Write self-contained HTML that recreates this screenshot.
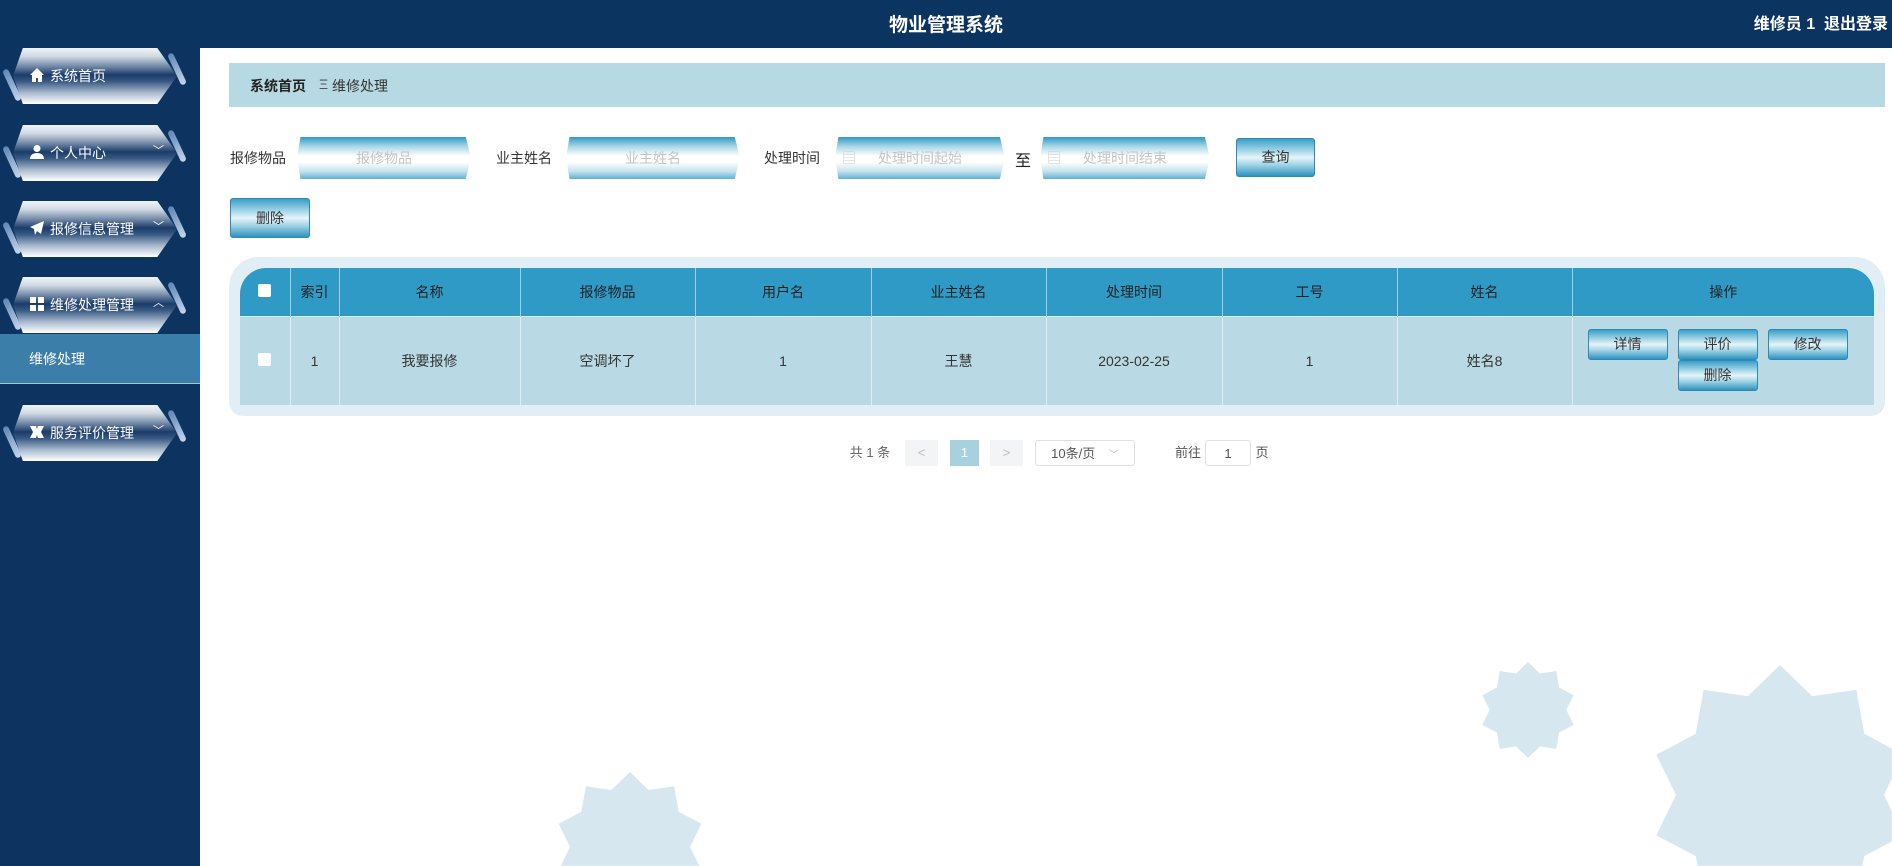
<!DOCTYPE html>
<html><head><meta charset="utf-8"><style>
*{box-sizing:border-box;margin:0;padding:0}
html,body{width:1892px;height:866px;overflow:hidden}
body{background:#fff;font-family:"Liberation Sans","Noto Sans CJK SC",sans-serif;font-size:13px;color:#333;position:relative}
#wrap{position:absolute;left:0;top:0;width:1892px;height:866px;overflow:hidden}
.hdr{position:absolute;left:0;top:0;width:1892px;height:48px;background:#0c3460}
.hdr .t{position:absolute;left:0;width:1892px;top:10px;text-align:center;color:#fff;font-size:19px;font-weight:bold}
.hdr .r{position:absolute;right:4px;top:10px;color:#fff;font-size:16px;font-weight:bold}
.side{position:absolute;left:0;top:48px;width:200px;height:818px;background:#0d3461}
.mi{position:absolute;left:0;width:200px;height:58px}
.mi .sh{position:absolute;left:13px;top:0;width:164px;height:56px;clip-path:polygon(6% 0,88% 0,100% 50%,88% 100%,6% 100%,0 50%);background:linear-gradient(#f0f4f8 0%,#d0d9e3 15%,#7088a6 33%,#1b3b69 48%,#3a5a84 60%,#a9bace 80%,#ffffff 100%)}
.mi .bl{position:absolute;left:9px;top:20px;width:6px;height:34px;background:linear-gradient(#5d86b8,#c6d6ea);border-radius:3px;transform:rotate(-25deg)}
.mi .br{position:absolute;left:174px;top:4px;width:6px;height:34px;background:linear-gradient(#5d86b8,#c6d6ea);border-radius:3px;transform:rotate(-25deg)}
.mi .lb{position:absolute;left:50px;top:18px;color:#fff;font-size:14px}
.mi .ic{position:absolute;left:29px;top:19px;width:16px;height:16px}
.mi .ar{position:absolute;left:153px;top:17px;color:#fff;font-size:11px}
.sub{position:absolute;left:0;top:334px;width:200px;height:50px;background:#3a7ea9;border-bottom:1px solid #9cc;}
.sub span{position:absolute;left:29px;top:15px;color:#fff;font-size:14px}
.bc{position:absolute;left:229px;top:63px;width:1656px;height:44px;background:#b7d9e3}
.bc span{position:absolute;top:13px;font-size:14px}
.lab{position:absolute;top:148px;font-size:14px;color:#333}
.inp{position:absolute;top:137px;height:42px;clip-path:polygon(2% 0,97% 0,100% 50%,97% 100%,2% 100%,0 50%);background:linear-gradient(#2f99c2 0%,#a7d5e6 22%,#fff 45%,#fff 60%,#c4e2ee 82%,#5fb1d1 100%);color:#c5c5c5;text-align:center;line-height:42px;font-size:14px}
.btn{position:absolute;background:linear-gradient(#3a9fc8 0%,#9fd3e6 30%,#e6f4f9 50%,#9fd3e6 70%,#2f93bd 100%);border-radius:3px;text-align:center;color:#333;font-size:14px;border:1px solid #2d8ab4}
.tw{position:absolute;left:229px;top:257px;width:1656px;height:159px;background:#e2eef5;border-radius:30px 30px 14px 14px}
table{position:absolute;left:240px;top:268px;border-collapse:collapse;table-layout:fixed}
th{background:#2e9ac5;height:48px;font-weight:normal;color:#222;font-size:14px;border-right:1px solid #9ed0e4}
td{background:#b9dae5;height:89px;text-align:center;color:#333;font-size:14px;border-right:1px solid #e0eef4;border-top:1px solid #d9ecf3}
.cb{display:inline-block;width:13px;height:13px;background:#fff;border-radius:2px}
.pg{position:absolute;top:440px;height:26px;font-size:13px;color:#666;line-height:26px;text-align:center}
</style></head><body><div id="wrap">
<svg style="position:absolute;left:0;top:0" width="1892" height="866" viewBox="0 0 1892 866">
<g fill="#d7e7ef">
<polygon transform="translate(555,772) scale(1.5)" points="50,0 62.4,12 79.4,9.5 82.4,26.5 97.6,34.5 90,50 96.2,62.6 3.8,62.6 10,50 2.4,34.5 17.6,26.5 20.6,9.5 37.6,12"/>
<polygon transform="translate(1480,662) scale(0.96)" points="50,0 62.4,12 79.4,9.5 82.4,26.5 97.6,34.5 90,50 97.6,65.5 82.4,73.5 79.4,90.5 62.4,88 50,100 37.6,88 20.6,90.5 17.6,73.5 2.4,65.5 10,50 2.4,34.5 17.6,26.5 20.6,9.5 37.6,12"/>
<polygon transform="translate(1650,665) scale(2.6)" points="50,0 62.4,12 79.4,9.5 82.4,26.5 93,32.1 93,43.7 90,50 93,56.3 93,67.9 82.4,73.5 81.7,77.2 18.3,77.2 17.6,73.5 2.4,65.5 10,50 2.4,34.5 17.6,26.5 20.6,9.5 37.6,12"/>
</g></svg>

<div class="hdr"><div class="t">物业管理系统</div><div class="r">维修员 1&nbsp;&nbsp;退出登录</div></div>
<div class="side">
 <div class="mi" style="top:0px"><div class="bl"></div><div class="br"></div><div class="sh"></div>
  <svg class="ic" viewBox="0 0 16 16"><path d="M8 1L1 8h2v7h4v-4h2v4h4V8h2z" fill="#fff"/></svg><span class="lb">系统首页</span></div>
 <div class="mi" style="top:77px"><div class="bl"></div><div class="br"></div><div class="sh"></div>
  <svg class="ic" viewBox="0 0 16 16"><circle cx="8" cy="4.5" r="3.5" fill="#fff"/><path d="M1 15c0-4 3-6 7-6s7 2 7 6z" fill="#fff"/></svg><span class="lb">个人中心</span><span class="ar">﹀</span></div>
 <div class="mi" style="top:153px"><div class="bl"></div><div class="br"></div><div class="sh"></div>
  <svg class="ic" viewBox="0 0 16 16"><path d="M15 1L1 7l4 2 1 6 2-4 4 3z" fill="#fff"/></svg><span class="lb">报修信息管理</span><span class="ar">﹀</span></div>
 <div class="mi" style="top:229px"><div class="bl"></div><div class="br"></div><div class="sh"></div>
  <svg class="ic" viewBox="0 0 16 16"><rect x="1" y="1" width="6" height="6" fill="#fff"/><rect x="9" y="1" width="6" height="6" fill="#fff"/><rect x="1" y="9" width="6" height="6" fill="#fff"/><rect x="9" y="9" width="6" height="6" fill="#fff"/></svg><span class="lb">维修处理管理</span><span class="ar">︿</span></div>
 <div class="sub" style="top:286px"><span>维修处理</span></div>
 <div class="mi" style="top:357px"><div class="bl"></div><div class="br"></div><div class="sh"></div>
  <svg class="ic" viewBox="0 0 16 16"><path d="M1 2h6l1 3 1-3h6l-3 6 3 6H9l-1-3-1 3H1l3-6z" fill="#fff"/></svg><span class="lb">服务评价管理</span><span class="ar">﹀</span></div>
</div>

<div class="bc"><span style="left:21px;font-weight:bold;color:#222">系统首页</span><span style="left:90px;color:#555">Ξ</span><span style="left:103px;color:#333">维修处理</span></div>

<div class="lab" style="left:230px">报修物品</div>
<div class="inp" style="left:297px;width:174px">报修物品</div>
<div class="lab" style="left:496px">业主姓名</div>
<div class="inp" style="left:566px;width:174px">业主姓名</div>
<div class="lab" style="left:764px">处理时间</div>
<div class="inp" style="left:835px;width:170px"><span style="position:absolute;left:7px;color:#ccc">▤</span>处理时间起始</div>
<div class="lab" style="left:1015px;font-size:16px;top:147px;color:#222">至</div>
<div class="inp" style="left:1040px;width:170px"><span style="position:absolute;left:7px;color:#ccc">▤</span>处理时间结束</div>
<div class="btn" style="left:1236px;top:138px;width:79px;height:39px;line-height:37px">查询</div>
<div class="btn" style="left:230px;top:198px;width:80px;height:40px;line-height:38px">删除</div>

<div class="tw"></div>
<table>
<colgroup><col style="width:50px"><col style="width:49px"><col style="width:181px"><col style="width:175px"><col style="width:176px"><col style="width:175px"><col style="width:176px"><col style="width:175px"><col style="width:175px"><col style="width:302px"></colgroup>
<tr><th style="border-top-left-radius:26px"><span class="cb"></span></th><th>索引</th><th>名称</th><th>报修物品</th><th>用户名</th><th>业主姓名</th><th>处理时间</th><th>工号</th><th>姓名</th><th style="border-top-right-radius:26px;border-right:none">操作</th></tr>
<tr><td><span class="cb"></span></td><td>1</td><td>我要报修</td><td>空调坏了</td><td>1</td><td>王慧</td><td>2023-02-25</td><td>1</td><td>姓名8</td><td style="position:relative;border-right:none">
<div class="btn" style="left:15px;top:12px;width:80px;height:31px;line-height:29px">详情</div>
<div class="btn" style="left:105px;top:12px;width:80px;height:31px;line-height:29px">评价</div>
<div class="btn" style="left:195px;top:12px;width:80px;height:31px;line-height:29px">修改</div>
<div class="btn" style="left:105px;top:43px;width:80px;height:31px;line-height:29px">删除</div>
</td></tr>
</table>

<div class="pg" style="left:845px;width:50px">共 1 条</div>
<div class="pg" style="left:905px;width:33px;background:#f2f4f6;color:#bbb">&lt;</div>
<div class="pg" style="left:950px;width:29px;background:#a8d1e0;color:#fff">1</div>
<div class="pg" style="left:990px;width:33px;background:#f2f4f6;color:#bbb">&gt;</div>
<div class="pg" style="left:1035px;width:100px;border:1px solid #dcdfe6;border-radius:3px;color:#555">10条/页 <span style="color:#bbb;font-size:10px;margin-left:10px">﹀</span></div>
<div class="pg" style="left:1172px;width:32px;color:#555">前往</div>
<div class="pg" style="left:1205px;width:46px;border:1px solid #dcdfe6;border-radius:3px;color:#555">1</div>
<div class="pg" style="left:1254px;width:16px;color:#555">页</div>
</div></body></html>
